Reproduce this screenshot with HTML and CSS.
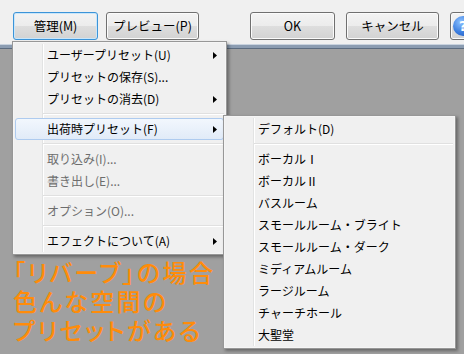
FILE: index.html
```html
<!DOCTYPE html>
<html lang="ja">
<head>
<meta charset="utf-8">
<title>プリセット</title>
<link rel="stylesheet" href="styles.css">
</head>
<body>
<div class="screen">
  <header class="toolbar">
    <div class="group">
      <button class="btn focus">管理(M)</button>
      <button class="btn wide">プレビュー(P)</button>
    </div>
    <div class="group right">
      <button class="btn">OK</button>
      <button class="btn wide">キャンセル</button>
      <button class="btn help"><span class="help-icon">?</span></button>
    </div>
  </header>
  <div class="frame-edge"></div>
  <main class="canvas">
    <p class="note">「リバーブ」の場合<br>色んな空間の<br>プリセットがある</p>
  </main>

  <div class="menu main-menu">
    <div class="item"><span class="label">ユーザープリセット(U)</span><svg class="arrow" width="4" height="7" viewBox="0 0 4 7"><polygon points="0,0 4,3.5 0,7"/></svg></div>
    <div class="item"><span class="label">プリセットの保存(S)...</span></div>
    <div class="item"><span class="label">プリセットの消去(D)</span><svg class="arrow" width="4" height="7" viewBox="0 0 4 7"><polygon points="0,0 4,3.5 0,7"/></svg></div>
    <div class="sep"></div>
    <div class="item active"><span class="label">出荷時プリセット(F)</span><svg class="arrow" width="4" height="7" viewBox="0 0 4 7"><polygon points="0,0 4,3.5 0,7"/></svg></div>
    <div class="sep"></div>
    <div class="item disabled"><span class="label">取り込み(I)...</span></div>
    <div class="item disabled"><span class="label">書き出し(E)...</span></div>
    <div class="sep"></div>
    <div class="item disabled"><span class="label">オプション(O)...</span></div>
    <div class="sep"></div>
    <div class="item"><span class="label">エフェクトについて(A)</span><svg class="arrow" width="4" height="7" viewBox="0 0 4 7"><polygon points="0,0 4,3.5 0,7"/></svg></div>
  </div>

  <div class="menu sub-menu">
    <div class="item"><span class="label">デフォルト(D)</span></div>
    <div class="sep"></div>
    <div class="item"><span class="label">ボーカルⅠ</span></div>
    <div class="item"><span class="label">ボーカルⅡ</span></div>
    <div class="item"><span class="label">バスルーム</span></div>
    <div class="item"><span class="label">スモールルーム・ブライト</span></div>
    <div class="item"><span class="label">スモールルーム・ダーク</span></div>
    <div class="item"><span class="label">ミディアムルーム</span></div>
    <div class="item"><span class="label">ラージルーム</span></div>
    <div class="item"><span class="label">チャーチホール</span></div>
    <div class="item"><span class="label">大聖堂</span></div>
  </div>
</div>
</body>
</html>
```

FILE: styles.css
```css
* { box-sizing: border-box; margin: 0; padding: 0; }
html, body { width: 464px; height: 354px; overflow: hidden; }
body {
  background: #a0a0a0;
  font-family: "Noto Sans CJK JP", "Noto Sans", sans-serif;
  font-size: 12px;
  color: #000;
}
.screen { position: relative; width: 464px; height: 354px; }

.toolbar {
  height: 44px;
  background: #f0f0f0;
  display: flex;
  padding: 12px 0 0 13px;
}
.group { display: flex; gap: 8px; }
.group.right { margin-left: 51px; gap: 11px; }

.btn {
  height: 28px;
  width: 85px;
  flex: none;
  border: 1px solid #707070;
  border-radius: 3px;
  background: linear-gradient(#f3f3f3 0%, #ececec 50%, #dedede 50%, #d2d2d2 100%);
  box-shadow: inset 0 0 0 1px #fbfbfb;
  font-family: "Noto Sans CJK JP", sans-serif;
  font-size: 12.5px;
  color: #000;
  display: flex;
  align-items: center;
  justify-content: center;
  line-height: 1;
}
.btn.wide { width: 93px; }
.btn.focus {
  border-color: #3c94d8;
  box-shadow: inset 0 0 0 1px #c9e6fa;
}
.btn.help { width: 30px; justify-content: flex-start; padding-left: 2px; }
.help-icon {
  width: 20px; height: 20px;
  border-radius: 50%;
  background: radial-gradient(circle at 40% 30%, #8ec2ff 0%, #3d7fe0 55%, #2357b8 100%);
  color: #fff;
  font-family: "DejaVu Sans", sans-serif;
  font-weight: bold;
  font-size: 14px;
  display: flex; align-items: center; justify-content: center;
}

.frame-edge {
  height: 5px;
  background: linear-gradient(#c8d2de 0 1px, #8b9cb1 1px 4px, #5b6b7e 4px 5px);
}

.canvas { padding: 208px 0 0 13px; }
.note {
  color: #ff8c0a;
  font-size: 24px;
  line-height: 29px;
  font-weight: 500;
  letter-spacing: 2.4px;
  font-feature-settings: "palt";
}

.menu {
  position: absolute;
  background: #f0f0f0;
  border: 1px solid #979797;
  padding: 2px;
  box-shadow: inset 0 0 0 1px #f5f5f5, 2px 2px 3px rgba(0,0,0,0.35);
}
.menu::before {
  content: "";
  position: absolute;
  top: 2px; bottom: 2px; left: 29px;
  width: 2px;
  background: linear-gradient(90deg, #e2e3e3 50%, #ffffff 50%);
}
.main-menu { left: 12px; top: 41px; width: 215px; }
.sub-menu { left: 223px; top: 115px; width: 233px; }

.item {
  position: relative;
  height: 22px;
  display: flex;
  align-items: center;
  padding: 0 7px 0 32px;
  white-space: nowrap;
  line-height: 22px;
}
.item .label { flex: 1; }
.item.disabled { color: #6d6d6d; }
.item.active {
  background: linear-gradient(#f2f7fd, #e1ebf8);
  border: 1px solid #aecbef;
  border-radius: 3px;
  padding-left: 31px;
  padding-right: 6px;
}
.arrow { fill: #000; flex: none; }

.sep { position: relative; height: 8px; margin-left: 28px; }
.sep::after {
  content: "";
  position: absolute;
  left: 0; right: 0; top: 3px;
  height: 2px;
  background: linear-gradient(#e0e0e0 50%, #ffffff 50%);
}
```
